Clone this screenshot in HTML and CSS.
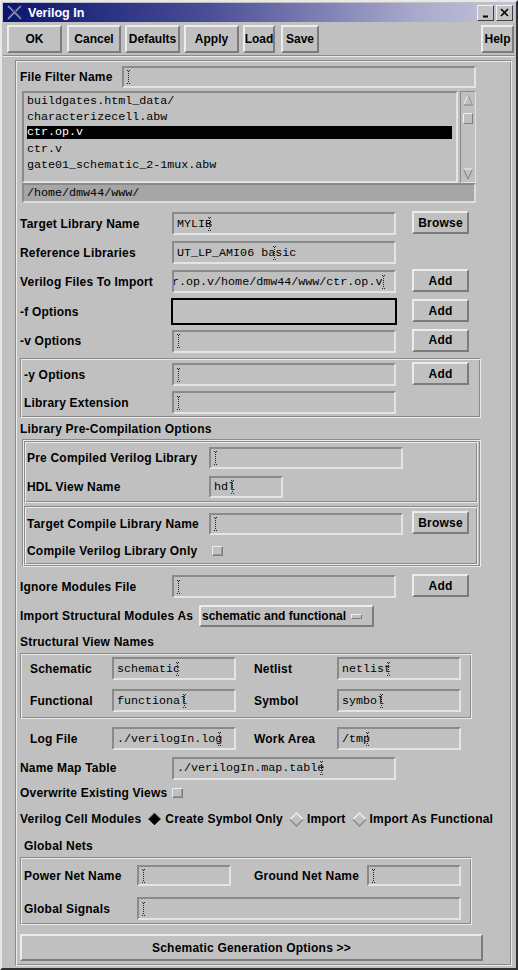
FILE: index.html
```html
<!DOCTYPE html>
<html lang="en">
<head>
<meta charset="UTF-8">
<meta name="viewport" content="width=device-width, initial-scale=1.0">
<title>Verilog In</title>
<link rel="stylesheet" href="styles.css">
</head>
<body>

<div class="window">
  <div class="titlebar">
    <svg class="title-icon" width="15" height="15" viewBox="0 0 15 15">
      <path d="M1 1 L14 14 M14 1 L1 14" stroke="#9aa0c8" stroke-width="1.4"/>
      <path d="M3 1 L14 12 M12 1 L1 12" stroke="#3a3f6a" stroke-width="0.8"/>
    </svg>
    <span class="title-text">Verilog In</span>
    <div class="title-btns">
      <div class="tbtn">
        <svg width="13" height="12" viewBox="0 0 13 12"><path d="M4 9.5 H9" stroke="#000" stroke-width="2"/></svg>
      </div>
      <div class="tbtn">
        <svg width="13" height="12" viewBox="0 0 13 12"><path d="M3 2 L10 9 M10 2 L3 9" stroke="#000" stroke-width="1.6"/></svg>
      </div>
    </div>
  </div>

  <div class="toolbar">
    <div class="btn w-ok">OK</div>
    <div class="btn w-cancel">Cancel</div>
    <div class="btn w-def">Defaults</div>
    <div class="btn w-apply">Apply</div>
    <div class="btn w-load">Load</div>
    <div class="btn w-save">Save</div>
    <div class="spacer"></div>
    <div class="btn w-help">Help</div>
  </div>
  <div class="separator"></div>

  <div class="frame">
    <div class="row h22 mt4">
      <span class="lbl lw-filter">File Filter Name</span>
      <div class="field fw-filter"><span class="caret"></span></div>
    </div>

    <div class="browser">
      <div class="list-wrap">
        <div class="list">
          <div class="item">buildgates.html_data/</div>
          <div class="item">characterizecell.abw</div>
          <div class="item selected">ctr.op.v</div>
          <div class="item">ctr.v</div>
          <div class="item">gate01_schematic_2-1mux.abw</div>
        </div>
        <div class="scroll">
          <svg width="12" height="88" viewBox="0 0 12 88">
            <path d="M1.5 12 L6 2 L10.5 12" fill="none" stroke="#f0f0f0" stroke-width="1"/>
            <path d="M6 2 L10.5 12 H1.5" fill="none" stroke="#808080" stroke-width="1"/>
            <rect x="1.5" y="20.5" width="9" height="10" fill="#c0c0c0" stroke="#808080"/>
            <path d="M1.5 30.5 V20.5 H10.5" fill="none" stroke="#f0f0f0"/>
            <path d="M1.5 76 L6 86 L10.5 76" fill="none" stroke="#808080" stroke-width="1"/>
            <path d="M1.5 76 H10.5" fill="none" stroke="#f0f0f0" stroke-width="1"/>
          </svg>
        </div>
      </div>
      <div class="path">/home/dmw44/www/</div>
    </div>

    <div class="row h29 mt6">
      <span class="lbl lw-main">Target Library Name</span>
      <div class="field fw-main">MYLIB<span class="caret over"></span></div>
      <div class="btn sbtn">Browse</div>
    </div>
    <div class="row h29">
      <span class="lbl lw-main">Reference Libraries</span>
      <div class="field fw-main">UT_LP_AMI06 ba<span class="caret over-mid"></span>sic</div>
    </div>
    <div class="row h29">
      <span class="lbl lw-main">Verilog Files To Import</span>
      <div class="field fw-main"><span class="clip-text">r.op.v/home/dmw44/www/ctr.op.v</span><span class="caret"></span></div>
      <div class="btn sbtn">Add</div>
    </div>
    <div class="row h31">
      <span class="lbl lw-main">-f Options</span>
      <div class="field fw-main focused"></div>
      <div class="btn sbtn">Add</div>
    </div>
    <div class="row h28">
      <span class="lbl lw-main">-v Options</span>
      <div class="field fw-main"><span class="caret"></span></div>
      <div class="btn sbtn">Add</div>
    </div>

    <div class="group g-y">
      <div class="row h29">
        <span class="lbl lw-y">-y Options</span>
        <div class="field fw-main"><span class="caret"></span></div>
        <div class="btn sbtn">Add</div>
      </div>
      <div class="row h27">
        <span class="lbl lw-y">Library Extension</span>
        <div class="field fw-main"><span class="caret"></span></div>
      </div>
    </div>

    <div class="heading mt3">Library Pre-Compilation Options</div>
    <div class="group g-pre">
      <div class="group g-sub">
        <div class="row h30">
          <span class="lbl lw-pre">Pre Compiled Verilog Library</span>
          <div class="field fw-pre"><span class="caret"></span></div>
        </div>
        <div class="row h28">
          <span class="lbl lw-pre">HDL View Name</span>
          <div class="field fw-hdl">hdl<span class="caret over"></span></div>
        </div>
      </div>
      <div class="group g-sub mt3">
        <div class="row h31">
          <span class="lbl lw-pre">Target Compile Library Name</span>
          <div class="field fw-pre"><span class="caret"></span></div>
          <div class="btn sbtn ml9">Browse</div>
        </div>
        <div class="row h24">
          <span class="lbl lw-pre">Compile Verilog Library Only</span>
          <span class="check ml3"></span>
        </div>
      </div>
    </div>

    <div class="row h29 mt5">
      <span class="lbl lw-main">Ignore Modules File</span>
      <div class="field fw-main"><span class="caret"></span></div>
      <div class="btn sbtn">Add</div>
    </div>
    <div class="row h30">
      <span class="lbl lw-import">Import Structural Modules As</span>
      <div class="btn optmenu">schematic and functional<span class="opt-bar"></span></div>
    </div>

    <div class="heading mt3">Structural View Names</div>
    <div class="group g-views">
      <div class="row h27">
        <span class="lbl lw-view">Schematic</span>
        <div class="field fw-view">schematic<span class="caret over"></span></div>
        <span class="lbl lw-view2">Netlist</span>
        <div class="field fw-view">netlist<span class="caret over"></span></div>
      </div>
      <div class="row h27 mt5">
        <span class="lbl lw-view">Functional</span>
        <div class="field fw-view">functional<span class="caret over"></span></div>
        <span class="lbl lw-view2">Symbol</span>
        <div class="field fw-view">symbol<span class="caret over"></span></div>
      </div>
    </div>

    <div class="row h27 mt6 pl10">
      <span class="lbl lw-view">Log File</span>
      <div class="field fw-view">./verilogIn.log<span class="caret over"></span></div>
      <span class="lbl lw-view2">Work Area</span>
      <div class="field fw-view">/tmp<span class="caret over"></span></div>
    </div>
    <div class="row h28 mt2">
      <span class="lbl lw-main">Name Map Table</span>
      <div class="field fw-main">./verilogIn.map.table<span class="caret over"></span></div>
    </div>
    <div class="row h22">
      <span class="lbl">Overwrite Existing Views</span>
      <span class="check ml5"></span>
    </div>
    <div class="row h26 mt2">
      <span class="lbl">Verilog Cell Modules</span>
      <svg class="radio" width="15" height="15" viewBox="0 0 15 15">
        <polygon points="7.5,1 14,7.5 7.5,14 1,7.5" fill="#000"/>
        <path d="M1 7.5 L7.5 1 L14 7.5" fill="none" stroke="#555" stroke-width="1"/>
        <path d="M1 7.5 L7.5 14 L14 7.5" fill="none" stroke="#f4f4f4" stroke-width="1"/>
      </svg>
      <span class="opt">Create Symbol Only</span>
      <svg class="radio" width="15" height="15" viewBox="0 0 15 15">
        <path d="M1 7.5 L7.5 1 L14 7.5" fill="none" stroke="#eeeeee" stroke-width="1.4"/>
        <path d="M1 7.5 L7.5 14 L14 7.5" fill="none" stroke="#8a8a8a" stroke-width="1.4"/>
      </svg>
      <span class="opt">Import</span>
      <svg class="radio" width="15" height="15" viewBox="0 0 15 15">
        <path d="M1 7.5 L7.5 1 L14 7.5" fill="none" stroke="#eeeeee" stroke-width="1.4"/>
        <path d="M1 7.5 L7.5 14 L14 7.5" fill="none" stroke="#8a8a8a" stroke-width="1.4"/>
      </svg>
      <span class="opt">Import As Functional</span>
    </div>

    <div class="heading mt6 pl4">Global Nets</div>
    <div class="group g-nets">
      <div class="row h29">
        <span class="lbl lw-net">Power Net Name</span>
        <div class="field fw-net"><span class="caret"></span></div>
        <span class="lbl lw-net2">Ground Net Name</span>
        <div class="field fw-net"><span class="caret"></span></div>
      </div>
      <div class="row h29 mt4">
        <span class="lbl lw-net">Global Signals</span>
        <div class="field fw-signals"><span class="caret"></span></div>
      </div>
    </div>

    <div class="btn bigbtn">Schematic Generation Options &gt;&gt;</div>
  </div>
</div>

</body>
</html>
```

FILE: styles.css
```css
/* Base look: Motif grey dialog */
* {
  box-sizing: border-box;
}

body {
  margin: 0;
  background-color: #c0c0c0;
  font-family: "Liberation Sans", Arial, sans-serif;
  font-size: 12px;
  font-weight: bold;
  letter-spacing: 0.2px;
  color: #000;
}

/* Window frame */
.window {
  width: 518px;
  height: 970px;
  border: 2px solid;
  border-color: #e8e8e8 #303030 #303030 #e8e8e8;
  padding: 1px;
  background-color: #c0c0c0;
  overflow: hidden;
}

/* Title bar */
.titlebar {
  height: 19px;
  display: flex;
  align-items: center;
  padding-left: 4px;
  background: linear-gradient(to right, #0a1470 0%, #4a4e96 40%, #a8a8cc 80%, #c4c4dc 100%);
  color: #fff;
}

.title-icon {
  flex: none;
}

.title-text {
  margin-left: 6px;
  font-size: 12.5px;
  letter-spacing: 0;
}

.title-btns {
  margin-left: auto;
  display: flex;
  gap: 2px;
  padding-right: 2px;
}

.tbtn {
  width: 17px;
  height: 16px;
  background-color: #c4c4c4;
  border: 1px solid;
  border-color: #f2f2f2 #404040 #404040 #f2f2f2;
  display: flex;
  align-items: center;
  justify-content: center;
}

/* Toolbar with the action buttons */
.toolbar {
  display: flex;
  padding: 3px 1px 0 4px;
  gap: 4px;
}

.spacer {
  flex: 1;
}

.separator {
  margin-top: 2px;
  height: 2px;
  border-top: 1px solid #8a8a8a;
  border-bottom: 1px solid #ececec;
}

/* Raised buttons */
.btn {
  height: 28px;
  display: flex;
  align-items: center;
  justify-content: center;
  border: 2px solid;
  border-color: #ececec #7c7c7c #7c7c7c #ececec;
  background-color: #c0c0c0;
  white-space: nowrap;
}

.w-ok { width: 55px; }
.w-cancel { width: 54px; margin-left: 1px; }
.w-def { width: 55px; }
.w-apply { width: 55px; }
.w-load { width: 32px; }
.w-save { width: 38px; margin-left: 2px; }
.w-help { width: 33px; }

.toolbar .btn {
  letter-spacing: 0;
}

.sbtn {
  width: 57px;
  height: 23px;
  margin-left: 16px;
  margin-top: -2px;
}

.optmenu {
  width: 175px;
  height: 22px;
  justify-content: flex-start;
  padding-left: 1px;
  letter-spacing: 0;
}

.opt-bar {
  width: 11px;
  height: 5px;
  margin-left: 5px;
  border: 1px solid;
  border-color: #f0f0f0 #7c7c7c #7c7c7c #f0f0f0;
}

.bigbtn {
  width: 463px;
  height: 27px;
  margin-top: 9px;
  margin-bottom: 3px;
}

/* Main etched frame */
.frame {
  margin: 3px 0 0 12px;
  width: 497px;
  border: 1px solid;
  border-color: #8a8a8a #ececec #ececec #8a8a8a;
  box-shadow: inset 1px 1px #ececec, inset -1px -1px #8a8a8a;
  padding: 1px 1px 1px 4px;
}

/* Groups */
.group {
  border: 1px solid;
  border-color: #8a8a8a #ececec #ececec #8a8a8a;
  box-shadow: inset 1px 1px #ececec, inset -1px -1px #8a8a8a;
}

.g-y {
  width: 461px;
  margin-top: 3px;
  padding: 1px 0 1px 3px;
}

.g-pre {
  width: 459px;
  margin: 2px 0 0 2px;
  padding: 1px 2px 1px 1px;
}

.g-sub {
  padding: 1px 0 1px 2px;
}

.g-views {
  width: 452px;
  margin-top: 3px;
  padding: 1px 0 4px 9px;
}

.g-nets {
  width: 452px;
  margin-top: 3px;
  padding: 3px 0 1px 3px;
}

/* Rows */
.row {
  display: flex;
  align-items: center;
}

.h22 { height: 22px; }
.h24 { height: 24px; }
.h26 { height: 26px; }
.h27 { height: 27px; }
.h28 { height: 28px; }
.h29 { height: 29px; }
.h30 { height: 30px; }
.h31 { height: 31px; }

.mt2 { margin-top: 2px; }
.mt3 { margin-top: 3px; }
.mt4 { margin-top: 4px; }
.mt5 { margin-top: 5px; }
.mt6 { margin-top: 6px; }
.ml3 { margin-left: 3px; }
.ml5 { margin-left: 5px; }
.ml9 { margin-left: 9px; }
.pl4 { padding-left: 4px; }
.pl10 { padding-left: 10px; }

.heading {
  height: 16px;
  line-height: 16px;
}

/* Labels */
.lbl {
  flex: none;
  white-space: nowrap;
}

.lw-filter { width: 102px; }
.lw-main { width: 152px; }
.lw-y { width: 148px; }
.lw-pre { width: 182px; }
.lw-import { width: 179px; }
.lw-view { width: 82px; }
.lw-view2 { width: 83px; margin-left: 18px; }
.lw-net { width: 113px; }
.lw-net2 { width: 113px; margin-left: 23px; }

/* Sunken text fields */
.field {
  flex: none;
  height: 23px;
  border: 2px solid;
  border-color: #8a8a8a #e4e4e4 #e4e4e4 #8a8a8a;
  padding-left: 3px;
  display: flex;
  align-items: center;
  overflow: hidden;
  white-space: pre;
  font-family: "Liberation Mono", "Courier New", monospace;
  font-weight: normal;
  font-size: 11.7px;
  letter-spacing: 0;
}

.fw-filter { width: 354px; height: 22px; }
.fw-main { width: 224px; }
.fw-pre { width: 194px; height: 22px; }
.fw-hdl { width: 74px; height: 22px; }
.fw-view { width: 124px; }
.fw-net { width: 94px; height: 21px; }
.fw-signals { width: 324px; }

.focused {
  width: 226px;
  height: 27px;
  margin-left: -1px;
  margin-right: -1px;
  border: 2px solid #000;
}

.clip-text {
  margin-left: -5px;
}

/* The dotted I-beam text cursor */
.caret {
  flex: none;
  display: inline-block;
  width: 3px;
  height: 14px;
  border-top: 1px dotted #222;
  border-bottom: 1px dotted #222;
  background-image: repeating-linear-gradient(to bottom, #222 0 1px, transparent 1px 2px);
  background-size: 1px 100%;
  background-position: center;
  background-repeat: no-repeat;
}

.caret.over {
  margin-left: -4px;
}

.caret.over-mid {
  margin: 0 -1px 0 -2px;
}

/* File list */
.browser {
  width: 454px;
  margin: 3px 0 0 2px;
}

.list-wrap {
  display: flex;
  gap: 2px;
  height: 92px;
}

.list {
  width: 436px;
  border: 2px solid;
  border-color: #8a8a8a #e4e4e4 #e4e4e4 #8a8a8a;
  padding: 0 4px 0 3px;
  font-family: "Liberation Mono", "Courier New", monospace;
  font-weight: normal;
  font-size: 11.7px;
  letter-spacing: 0;
}

.item {
  height: 16px;
  line-height: 16px;
  white-space: pre;
}

.item.selected {
  background-color: #000;
  color: #fff;
  margin-top: 1px;
  height: 13px;
  line-height: 13px;
  margin-bottom: 2px;
}

.scroll {
  width: 16px;
  border: 1px solid;
  border-color: #8a8a8a #e4e4e4 #e4e4e4 #8a8a8a;
  padding: 1px;
}

.path {
  height: 20px;
  background-color: #a6a6a6;
  border: 2px solid;
  border-color: #8a8a8a #dcdcdc #dcdcdc #8a8a8a;
  padding-left: 3px;
  line-height: 16px;
  font-family: "Liberation Mono", "Courier New", monospace;
  font-weight: normal;
  font-size: 11.7px;
  letter-spacing: 0;
}

/* Check box and radio diamonds */
.check {
  width: 11px;
  height: 10px;
  border: 1px solid;
  border-color: #ececec #7c7c7c #7c7c7c #ececec;
  box-shadow: inset -1px -1px #9a9a9a;
}

.radio {
  flex: none;
  margin-left: 6px;
}

.opt {
  margin-left: 3px;
}
```
